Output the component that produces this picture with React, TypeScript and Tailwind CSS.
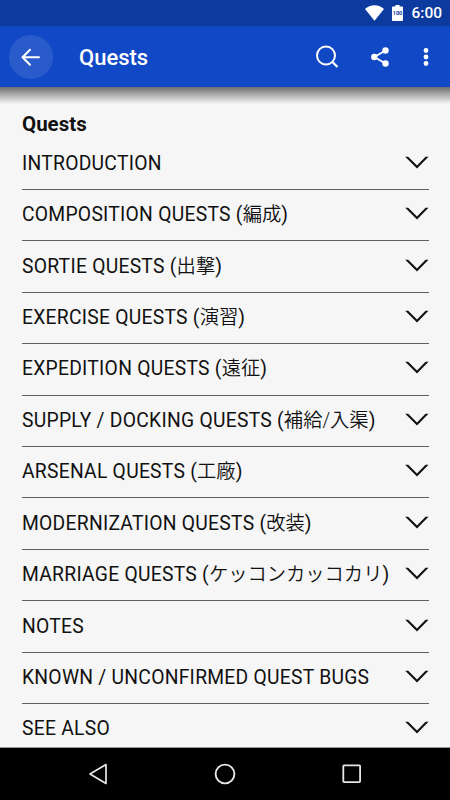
import React from "react";

interface Section {
  id: string;
  title: string;
  japanese?: string;
}

const sections: Section[] = [
  { id: "introduction", title: "INTRODUCTION" },
  { id: "composition", title: "COMPOSITION QUESTS", japanese: "編成" },
  { id: "sortie", title: "SORTIE QUESTS", japanese: "出撃" },
  { id: "exercise", title: "EXERCISE QUESTS", japanese: "演習" },
  { id: "expedition", title: "EXPEDITION QUESTS", japanese: "遠征" },
  { id: "supply", title: "SUPPLY / DOCKING QUESTS", japanese: "補給/入渠" },
  { id: "arsenal", title: "ARSENAL QUESTS", japanese: "工廠" },
  { id: "modernization", title: "MODERNIZATION QUESTS", japanese: "改装" },
  { id: "marriage", title: "MARRIAGE QUESTS", japanese: "ケッコンカッコカリ" },
  { id: "notes", title: "NOTES" },
  { id: "bugs", title: "KNOWN / UNCONFIRMED QUEST BUGS" },
  { id: "see-also", title: "SEE ALSO" },
];

function StatusBar() {
  return (
    <div className="flex h-[26px] shrink-0 items-center justify-end bg-[#0d3a9e] pr-[9px] text-white">
      <svg className="mr-[8px] h-[16px] w-[19px]" viewBox="0 0 19 16" fill="currentColor">
        <path d="M9.5 15.7 0 4.1C2.5 1.5 5.8.2 9.5.2S16.500 1.500 19 4.100Z" />
      </svg>
      <svg className="mr-[8px] h-[16px] w-[11px]" viewBox="0 0 11 16">
        <path d="M3.400 0h4.200v1.500H10c.6 0 1 .4 1 1V15c0 .6-.4 1-1 1H1c-.6 0-1-.4-1-1V2.500c0-.6.4-1 1-1h2.400Z" fill="#fff" />
        <text x="5.500" y="10.300" textAnchor="middle" fontSize="5.600" fontWeight="700" fill="#0d3a9e">
          100
        </text>
      </svg>
      <span className="-mr-px pt-[2px] text-[15.500px] leading-none font-medium">6:00</span>
    </div>
  );
}

function AppBar() {
  return (
    <header className="flex h-[61px] shrink-0 items-center bg-[#1148c6] pl-[9px] text-white">
      <button className="flex size-[44px] items-center justify-center rounded-full bg-[#2a5bcb]" aria-label="Back">
        <svg className="size-[20px]" viewBox="0 0 20 20" fill="none" stroke="currentColor" strokeWidth="2" strokeLinecap="round" strokeLinejoin="round">
          <path d="M18 10.300H1.500M9 2.800 1.500 10.300 9 17.800" />
        </svg>
      </button>
      <h1 className="ml-[26px] flex-1 pt-[3px] text-[22px] leading-none font-medium">Quests</h1>
      <button className="mr-[32px]" aria-label="Search">
        <svg className="size-[24px]" viewBox="0 0 24 24" fill="none" stroke="currentColor" strokeWidth="2">
          <circle cx="11" cy="10.500" r="9" />
          <path d="m17 16.500 5.500 5.500" strokeWidth="2.200" />
        </svg>
      </button>
      <button className="mr-[34px]" aria-label="Share">
        <svg className="h-[20px] w-[18px]" viewBox="0 0 18 20" fill="currentColor">
          <path d="M14.500 3.500 3.300 10l11.200 6.500" fill="none" stroke="currentColor" strokeWidth="1.800" />
          <circle cx="14.500" cy="3.500" r="3.200" />
          <circle cx="3.300" cy="10" r="3.200" />
          <circle cx="14.500" cy="16.500" r="3.200" />
        </svg>
      </button>
      <button className="mr-[21px]" aria-label="More">
        <svg className="h-[20px] w-[6px]" viewBox="0 0 6 20" fill="currentColor">
          <circle cx="3" cy="3.500" r="2.400" />
          <circle cx="3" cy="10" r="2.400" />
          <circle cx="3" cy="16.500" r="2.400" />
        </svg>
      </button>
    </header>
  );
}

function SectionRow({ section }: { section: Section }) {
  return (
    <li className="flex h-[51.430px] shrink-0 items-center justify-between border-b border-[#606060]">
      <span className="text-[19.300px] leading-[24px] tracking-[0.260px] whitespace-nowrap">
        {section.title}
        {section.japanese && (
          <>
            {" ("}
            <span className="font-[350] tracking-normal">{section.japanese}</span>)
          </>
        )}
      </span>
      <svg className="mb-[3px] h-[13px] w-[24px]" viewBox="0 0 24 13" fill="#111">
        <path d="M.2.700h3L12 9.600 20.500.700h3L12 12.500Z" />
      </svg>
    </li>
  );
}

function NavBar() {
  return (
    <nav className="flex h-[53px] shrink-0 items-center justify-between border-t border-[#999] bg-black px-[88px] text-[#e6e6e6]">
      <svg className="h-[22px] w-[20px]" viewBox="0 0 20 22" fill="none" stroke="currentColor" strokeWidth="1.700" strokeLinejoin="round">
        <path d="M18 1.600v18.800L2 11Z" />
      </svg>
      <svg className="size-[22px]" viewBox="0 0 22 22" fill="none" stroke="currentColor" strokeWidth="1.900">
        <circle cx="11" cy="11" r="9.400" />
      </svg>
      <svg className="size-[20px]" viewBox="0 0 20 20" fill="none" stroke="currentColor" strokeWidth="1.800">
        <rect x="1.300" y="1.300" width="16.800" height="16.800" rx="0.800" />
      </svg>
    </nav>
  );
}

export default function App() {
  return (
    <div className="flex h-[800px] w-[450px] flex-col overflow-hidden bg-[#f6f6f6] font-[Roboto,'Noto_Sans_CJK_JP',sans-serif] text-[#111]">
      <StatusBar />
      <AppBar />
      <main className="flex min-h-0 flex-1 flex-col overflow-hidden">
        <div className="h-[17px] shrink-0 bg-linear-to-b from-[#707070] via-[#b4b4b4] via-50% to-[#f6f6f6]" />
        <div className="pr-[21px] pl-[22px]">
          <h2 className="mt-[8px] h-[26.500px] text-[20.500px] leading-[25px] font-bold">Quests</h2>
          <ul>
            {sections.map((section) => (
              <SectionRow key={section.id} section={section} />
            ))}
          </ul>
        </div>
      </main>
      <NavBar />
    </div>
  );
}
